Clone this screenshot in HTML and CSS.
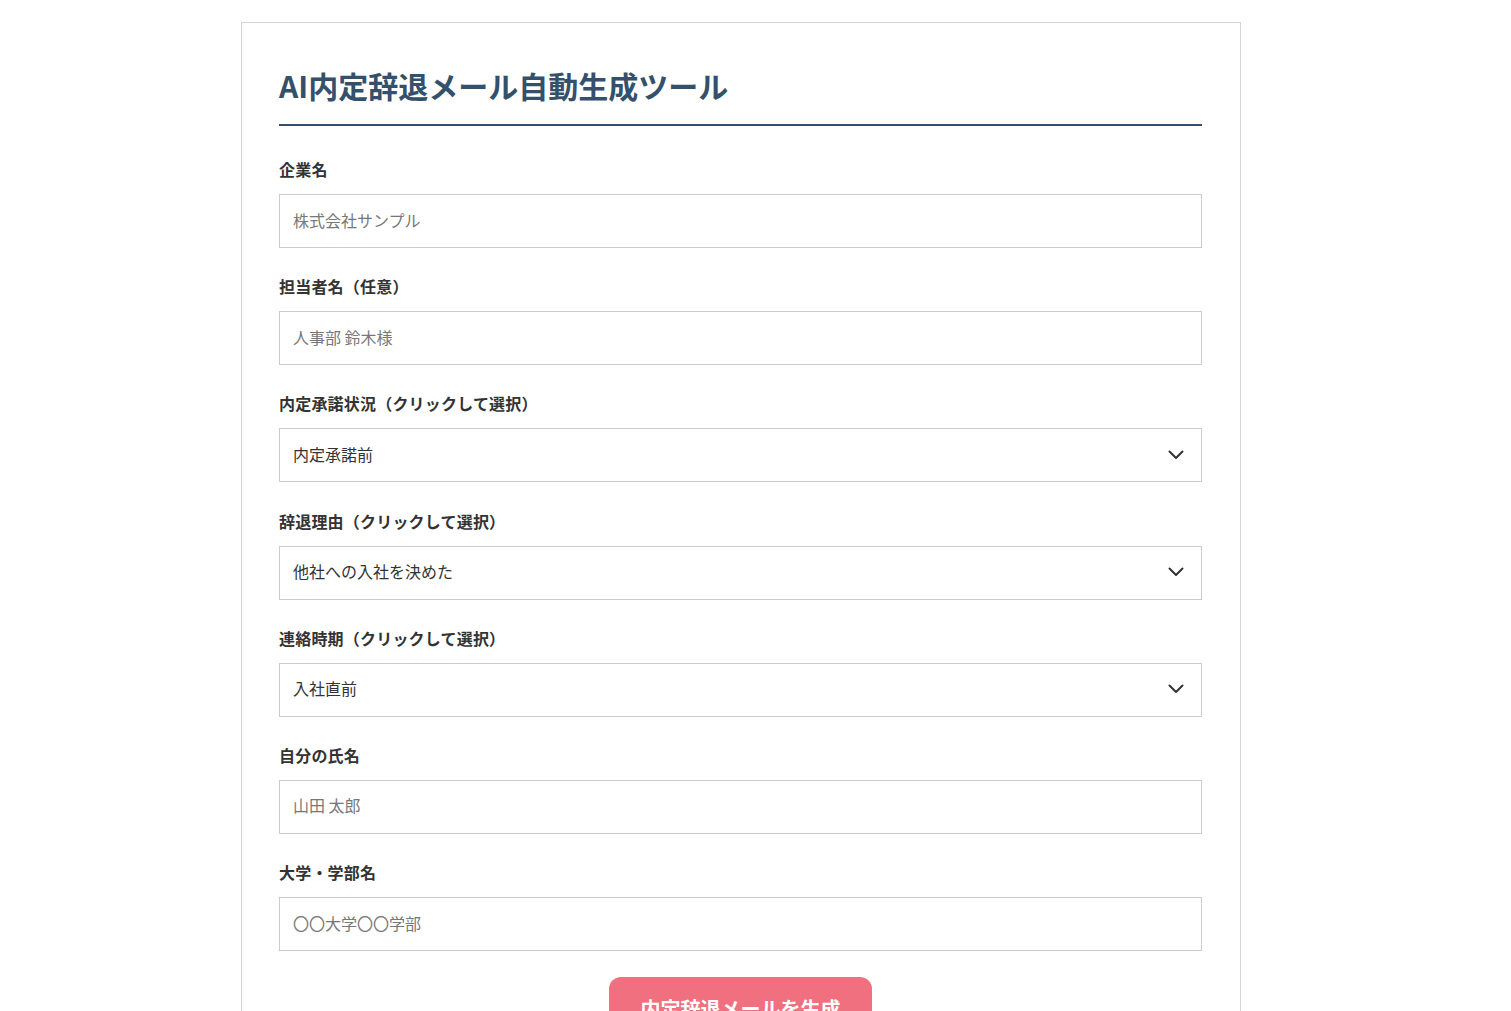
FILE: index.html
```html
<!DOCTYPE html>
<html lang="ja">
<head>
<meta charset="utf-8">
<title>AI内定辞退メール自動生成ツール</title>
<link rel="stylesheet" href="styles.css">
</head>
<body>
<main class="tool">
  <h2 class="tool-title">AI内定辞退メール自動生成ツール</h2>
  <form class="tool-form">
    <div class="field">
      <label class="field-label">企業名</label>
      <input class="field-input" type="text" placeholder="株式会社サンプル">
    </div>
    <div class="field">
      <label class="field-label">担当者名（任意）</label>
      <input class="field-input" type="text" placeholder="人事部 鈴木様">
    </div>
    <div class="field">
      <label class="field-label">内定承諾状況（クリックして選択）</label>
      <div class="select">
        <span class="select-value">内定承諾前</span>
        <svg class="chevron" width="16" height="10" viewBox="0 0 16 10"><path d="M1.5 1.5 L8 8 L14.5 1.5" fill="none" stroke="#333" stroke-width="2" stroke-linecap="round" stroke-linejoin="round"/></svg>
      </div>
    </div>
    <div class="field">
      <label class="field-label">辞退理由（クリックして選択）</label>
      <div class="select">
        <span class="select-value">他社への入社を決めた</span>
        <svg class="chevron" width="16" height="10" viewBox="0 0 16 10"><path d="M1.5 1.5 L8 8 L14.5 1.5" fill="none" stroke="#333" stroke-width="2" stroke-linecap="round" stroke-linejoin="round"/></svg>
      </div>
    </div>
    <div class="field">
      <label class="field-label">連絡時期（クリックして選択）</label>
      <div class="select">
        <span class="select-value">入社直前</span>
        <svg class="chevron" width="16" height="10" viewBox="0 0 16 10"><path d="M1.5 1.5 L8 8 L14.5 1.5" fill="none" stroke="#333" stroke-width="2" stroke-linecap="round" stroke-linejoin="round"/></svg>
      </div>
    </div>
    <div class="field">
      <label class="field-label">自分の氏名</label>
      <input class="field-input" type="text" placeholder="山田 太郎">
    </div>
    <div class="field">
      <label class="field-label">大学・学部名</label>
      <input class="field-input" type="text" placeholder="〇〇大学〇〇学部">
    </div>
    <div class="actions">
      <button class="submit" type="button">内定辞退メールを生成</button>
    </div>
  </form>
</main>
</body>
</html>
```
FILE: styles.css
```css
html, body {
  margin: 0;
  padding: 0;
  background: #ffffff;
}
body {
  font-family: "Noto Sans CJK JP", "Noto Sans", sans-serif;
  color: #333333;
  padding-right: 29px;
}
.tool {
  box-sizing: border-box;
  width: 1000px;
  margin: 22px auto 0;
  padding: 40px 38px 40px 37px;
  border: 1px solid #d4d4d4;
  border-bottom: none;
}
.tool-title {
  margin: 0;
  padding-bottom: 16px;
  font-size: 30px;
  line-height: 45px;
  font-weight: 700;
  color: #34506b;
  border-bottom: 2px solid #34506b;
}
.tool-form {
  display: flex;
  flex-direction: column;
  gap: 26.2px;
  margin-top: 31px;
}
.field {
  display: flex;
  flex-direction: column;
  gap: 13px;
}
.field-label {
  font-size: 16px;
  line-height: 24px;
  font-weight: 700;
  letter-spacing: 0.2px;
  color: #333333;
}
.field-input,
.select {
  box-sizing: border-box;
  width: 100%;
  height: 54px;
  border: 1px solid #cccccc;
  background: #ffffff;
  padding: 0 13px 3px;
  font-family: inherit;
  font-size: 16px;
  color: #333333;
  border-radius: 0;
  outline: none;
}
.field-input::placeholder {
  color: #777777;
}
.select {
  display: flex;
  align-items: center;
  justify-content: space-between;
  padding-right: 17px;
}
.select-value {
  font-size: 16px;
  color: #333333;
}
.chevron {
  display: block;
  margin-top: 2px;
}
.actions {
  display: flex;
  justify-content: center;
  margin-top: 0;
}
.submit {
  width: 263px;
  height: 62px;
  border: none;
  border-radius: 12px;
  background: #f07080;
  color: #ffffff;
  font-family: inherit;
  font-size: 20px;
  font-weight: 700;
  cursor: pointer;
}
```
